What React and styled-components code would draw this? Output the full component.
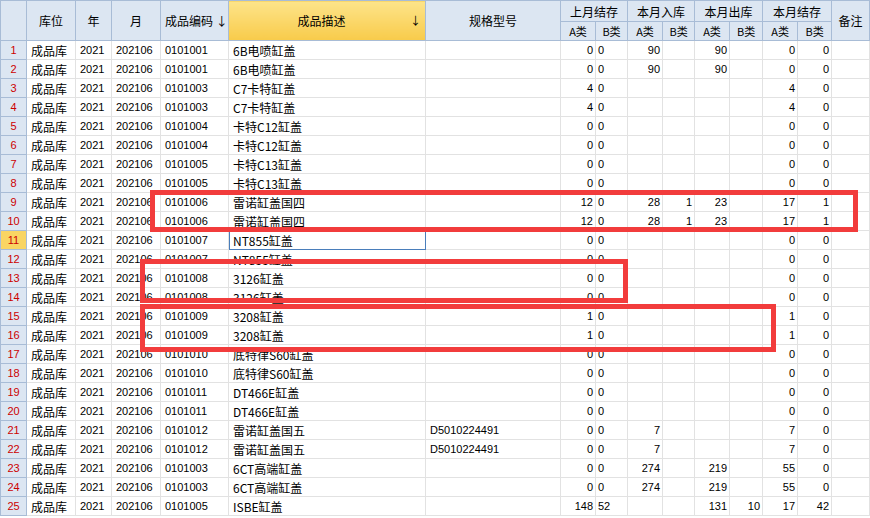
import styled, { createGlobalStyle } from "styled-components";

const Global = createGlobalStyle`
  body { margin: 0; background: #fff; font-family: "Liberation Sans", "Noto Sans CJK SC", sans-serif; }
`;

const Wrap = styled.div`
  position: relative;
  width: 870px;
  height: 518px;
  overflow: hidden;
`;

const Grid = styled.table`
  border-collapse: collapse;
  table-layout: fixed;
  width: 870px;
  font-size: 12px;
  color: #000;
`;

const H = styled.th`
  background: ${(p) => (p.$active ? "linear-gradient(#fde48a, #f8cb4a)" : "#dce6f2")};
  border: 1px solid #a8bcd6;
  border-top: ${(p) => (p.$top ? "1px solid #a8bcd6" : "none")};
  font-weight: normal;
  font-size: ${(p) => (p.$sub ? "11px" : "12px")};
  height: ${(p) => (p.$sub ? "18px" : "20px")};
  padding: 0 4px;
  text-align: ${(p) => p.$align || "center"};
  font-family: "Noto Sans CJK SC", sans-serif;
  white-space: nowrap;
  overflow: hidden;
`;

const Arrow = styled.span`
  float: right;
  font-size: 11px;
`;

const RowNum = styled.td`
  background: ${(p) => (p.$sel ? "#f9d563" : "#dce6f2")};
  color: #c00;
  border: 1px solid #a8bcd6;
  border-top: none;
  text-align: center;
  font-size: 11px;
  height: 18px;
  padding: 0;
`;

const Cell = styled.td`
  border: 1px solid #e2e2e2;
  padding: 0 ${(p) => (p.$tight ? "2px" : "4px")};
  height: 18px;
  white-space: nowrap;
  overflow: hidden;
  text-align: ${(p) => p.$align || "left"};
  font-family: ${(p) => (p.$cjk ? '"Noto Sans CJK SC", sans-serif' : '"Liberation Sans", "Noto Sans CJK SC", sans-serif')};
  font-size: ${(p) => (p.$cjk ? "12px" : "11px")};
  outline: ${(p) => (p.$focus ? "1px solid #4a7ebb" : "none")};
  outline-offset: -1px;
`;

const Mark = styled.div`
  position: absolute;
  border: 5px solid #f23c3c;
  pointer-events: none;
`;

const cols = [26, 49, 36, 49, 68, 197, 135, 35, 32, 35, 32, 35, 33, 35, 34, 38];

const rows = [
  ["0101001", "6B电喷缸盖", "", "0", "0", "90", "", "90", "", "0", "0"],
  ["0101001", "6B电喷缸盖", "", "0", "0", "90", "", "90", "", "0", "0"],
  ["0101003", "C7卡特缸盖", "", "4", "0", "", "", "", "", "4", "0"],
  ["0101003", "C7卡特缸盖", "", "4", "0", "", "", "", "", "4", "0"],
  ["0101004", "卡特C12缸盖", "", "0", "0", "", "", "", "", "0", "0"],
  ["0101004", "卡特C12缸盖", "", "0", "0", "", "", "", "", "0", "0"],
  ["0101005", "卡特C13缸盖", "", "0", "0", "", "", "", "", "0", "0"],
  ["0101005", "卡特C13缸盖", "", "0", "0", "", "", "", "", "0", "0"],
  ["0101006", "雷诺缸盖国四", "", "12", "0", "28", "1", "23", "", "17", "1"],
  ["0101006", "雷诺缸盖国四", "", "12", "0", "28", "1", "23", "", "17", "1"],
  ["0101007", "NT855缸盖", "", "0", "0", "", "", "", "", "0", "0"],
  ["0101007", "NT855缸盖", "", "0", "0", "", "", "", "", "0", "0"],
  ["0101008", "3126缸盖", "", "0", "0", "", "", "", "", "0", "0"],
  ["0101008", "3126缸盖", "", "0", "0", "", "", "", "", "0", "0"],
  ["0101009", "3208缸盖", "", "1", "0", "", "", "", "", "1", "0"],
  ["0101009", "3208缸盖", "", "1", "0", "", "", "", "", "1", "0"],
  ["0101010", "底特律S60缸盖", "", "0", "0", "", "", "", "", "0", "0"],
  ["0101010", "底特律S60缸盖", "", "0", "0", "", "", "", "", "0", "0"],
  ["0101011", "DT466E缸盖", "", "0", "0", "", "", "", "", "0", "0"],
  ["0101011", "DT466E缸盖", "", "0", "0", "", "", "", "", "0", "0"],
  ["0101012", "雷诺缸盖国五", "D5010224491", "0", "0", "7", "", "", "", "7", "0"],
  ["0101012", "雷诺缸盖国五", "D5010224491", "0", "0", "7", "", "", "", "7", "0"],
  ["0101003", "6CT高端缸盖", "", "0", "0", "274", "", "219", "", "55", "0"],
  ["0101003", "6CT高端缸盖", "", "0", "0", "274", "", "219", "", "55", "0"],
  ["0101005", "ISBE缸盖", "", "148", "52", "", "", "131", "10", "17", "42"],
];

export default function App() {
  return (
    <Wrap>
      <Global />
      <Grid>
        <colgroup>
          {cols.map((w, i) => (
            <col key={i} style={{ width: w }} />
          ))}
        </colgroup>
        <thead>
          <tr>
            <H rowSpan={2} $top />
            <H rowSpan={2} $top>库位</H>
            <H rowSpan={2} $top>年</H>
            <H rowSpan={2} $top>月</H>
            <H rowSpan={2} $top>成品编码 <span>↓</span></H>
            <H rowSpan={2} $top $active>成品描述<Arrow>↓</Arrow></H>
            <H rowSpan={2} $top>规格型号</H>
            <H colSpan={2} $top>上月结存</H>
            <H colSpan={2} $top>本月入库</H>
            <H colSpan={2} $top>本月出库</H>
            <H colSpan={2} $top>本月结存</H>
            <H rowSpan={2} $top>备注</H>
          </tr>
          <tr>
            {Array.from({ length: 8 }).map((_, i) => (
              <H key={i} $sub>{i % 2 ? "B类" : "A类"}</H>
            ))}
          </tr>
        </thead>
        <tbody>
          {rows.map((r, i) => (
            <tr key={i}>
              <RowNum $sel={i === 10}>{i + 1}</RowNum>
              <Cell $cjk>成品库</Cell>
              <Cell>2021</Cell>
              <Cell>202106</Cell>
              <Cell>{r[0]}</Cell>
              <Cell $cjk $focus={i === 10}>{r[1]}</Cell>
              <Cell>{r[2]}</Cell>
              <Cell $align="right" $tight>{r[3]}</Cell>
              <Cell $tight>{r[4]}</Cell>
              <Cell $align="right" $tight>{r[5]}</Cell>
              <Cell $align="right" $tight>{r[6]}</Cell>
              <Cell $align="right" $tight>{r[7]}</Cell>
              <Cell $align="right" $tight>{r[8]}</Cell>
              <Cell $align="right" $tight>{r[9]}</Cell>
              <Cell $align="right" $tight>{r[10]}</Cell>
              <Cell />
            </tr>
          ))}
        </tbody>
      </Grid>
      <Mark style={{ left: 150, top: 190, width: 698, height: 32 }} />
      <Mark style={{ left: 140, top: 259, width: 478, height: 34 }} />
      <Mark style={{ left: 140, top: 304, width: 626, height: 38 }} />
    </Wrap>
  );
}
